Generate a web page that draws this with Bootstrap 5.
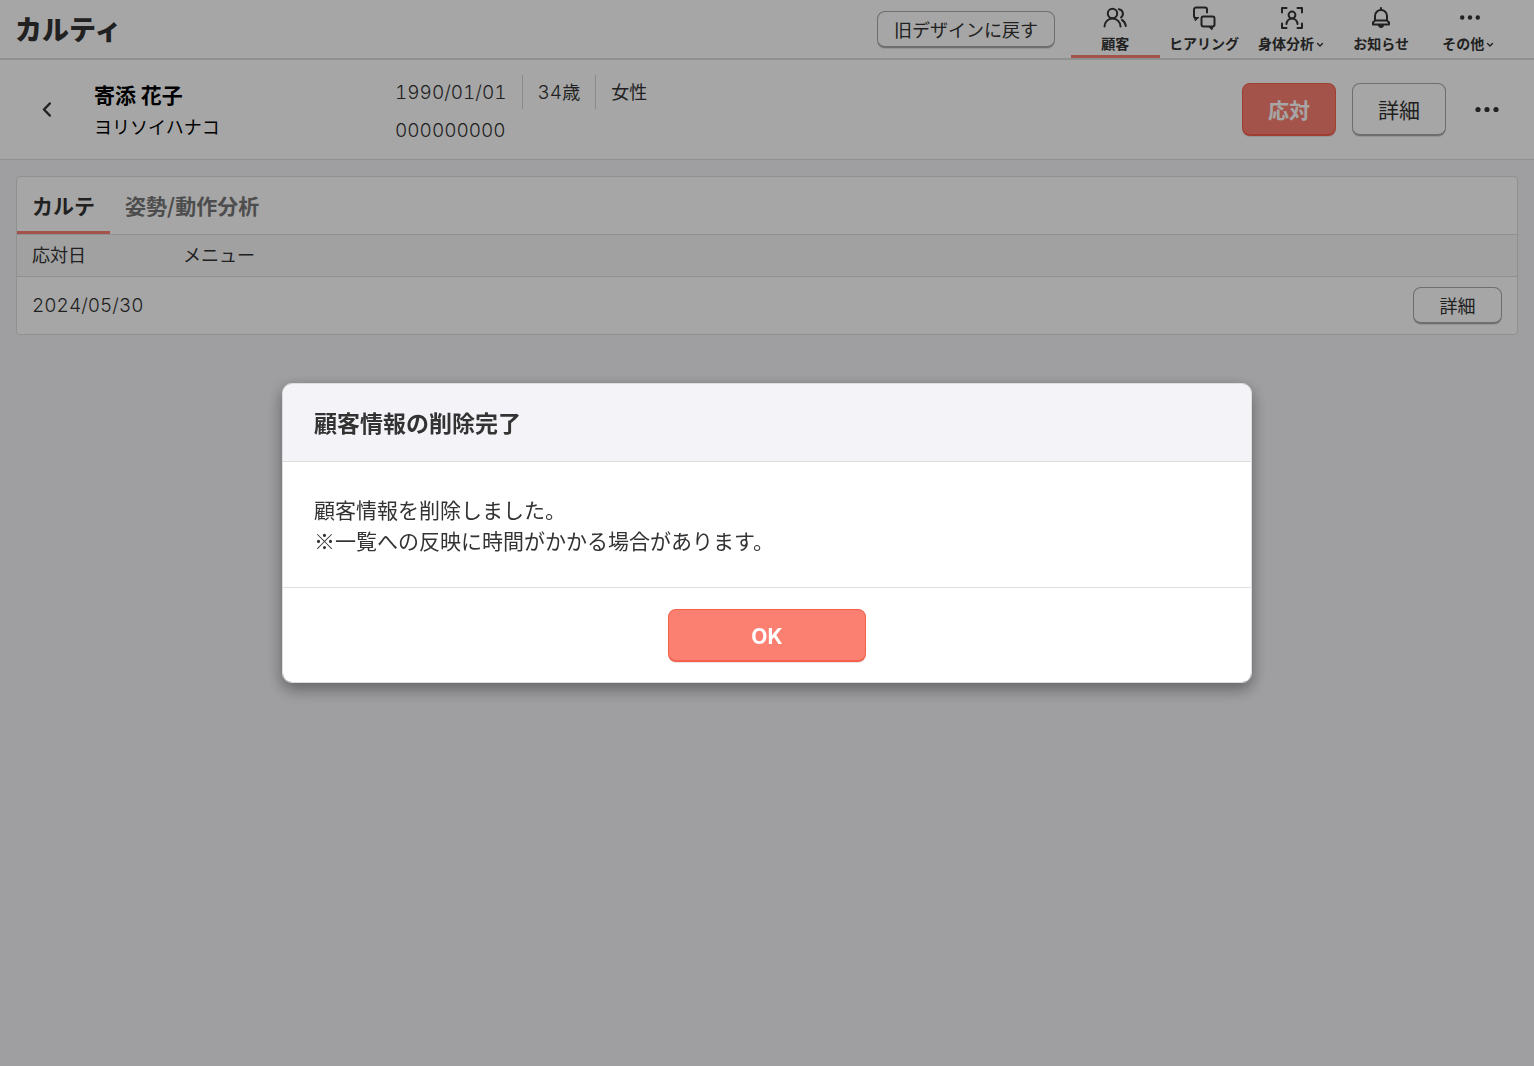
<!DOCTYPE html>
<html lang="ja">
<head>
<meta charset="utf-8">
<meta name="viewport" content="width=device-width, initial-scale=1">
<title>カルティ</title>
<link href="https://cdn.jsdelivr.net/npm/bootstrap@5.3.0/dist/css/bootstrap.min.css" rel="stylesheet">
<style>
  :root { --ink: #333; --line: #dedede; --coral: #fb8072; --coral-dark: #f4604c; --lavender: #f4f3f8; }
  body { font-family: "Noto Sans CJK JP", sans-serif; font-size: 18px; line-height: 28px; color: var(--ink); background: var(--lavender); }
  .topbar { height: 60px; border-bottom: 2px solid #dedede; padding: 0 20px 0 15px; }
  .brand-text { font-size: 27px; font-weight: 900; color: var(--ink); text-decoration: none; }
  .main-nav { width: 443px; height: 58px; }
  .main-nav a { color: var(--ink); font-size: 14px; line-height: 20px; font-weight: 700; text-decoration: none; padding-top: 5px; border-bottom: 3px solid transparent; flex: 1 1 0; white-space: nowrap; }
  .main-nav a.active { border-color: var(--coral); }
  .main-nav .nav-icon { width: 26px; height: 26px; margin-bottom: 2px; }
  .main-nav .caret { width: 8px; height: 14px; margin-left: 2px; }
  .main-nav .has-menu { padding-right: 3px; }
  .line-icon { fill: none; stroke: currentColor; stroke-width: 2; stroke-linecap: round; stroke-linejoin: round; }
  .btn-plain, .btn-coral { border-radius: 8px; border: 1px solid #aaa; border-bottom-width: 2px; padding: 0 16px; line-height: 28px; box-shadow: 0 1px 0 rgba(0,0,0,.1); }
  .btn-plain, .btn-plain:hover { background: #fff; color: var(--ink); border-color: #aaa; }
  .btn-coral, .btn-coral:hover { background: var(--coral); color: #fff; border-color: var(--coral-dark); font-weight: 700; }
  .btn-sm-h { height: 37px; font-size: 18px; }
  .btn-lg-h { height: 53px; font-size: 21px; }
  .w-action { width: 94px; }
  .w-row { width: 89px; }
  .customer { height: 100px; background: #fff; border-bottom: 1px solid var(--line); padding: 0 32px; }
  .customer-name { width: 309px; color: #000; }
  .customer-name h1 { font-size: 21px; line-height: 32px; font-weight: 700; margin: 0; }
  .customer-name div { line-height: 32px; }
  .digits { font-family: Inter, "Noto Sans CJK JP", sans-serif; font-size: 19px; font-weight: 300; font-variant-numeric: tabular-nums; }
  .fact-list { padding-top: 2px; }
  .facts { line-height: 32px; }
  .facts > span + span { border-left: 1px solid #d4d4d4; padding-left: 15px; margin-left: 15px; }
  .icon-btn { background: none; border: 0; padding: 0; color: var(--ink); }
  .panel { border: 1px solid var(--line); border-radius: 4px; background: #fff; overflow: hidden; }
  .panel-tabs { height: 58px; border-bottom: 1px solid var(--line); }
  .panel-tabs a { font-size: 21px; font-weight: 700; color: #777; text-decoration: none; padding: 14px 15px 0; border-bottom: 3px solid transparent; }
  .panel-tabs a.active { color: var(--ink); border-color: var(--coral); }
  .records { margin: 0; color: var(--ink); --bs-table-color: var(--ink); }
  .records th { background: #f7f7f7; font-weight: 400; padding: 5px 15px 8px; border-color: var(--line); }
  .records td { height: 57px; padding: 0 15px; vertical-align: middle; border: 0; }
  .records .col-date { width: 151px; }
  .dim { opacity: .35; }
  .notice { max-width: 970px; }
  .notice .modal-content { border: 1px solid #ddd; border-radius: 10px; color: var(--ink); box-shadow: 0 6px 16px rgba(0,0,0,.4); }
  .notice .modal-header { background: var(--lavender); height: 78px; padding: 0 31px; border-color: var(--line); border-radius: 9px 9px 0 0; }
  .notice .modal-title { font-size: 23px; font-weight: 700; }
  .notice .modal-body { font-size: 21px; line-height: 31px; padding: 32px 31px 31px; }
  .notice .modal-footer { padding: 21px 31px 20px; border-color: var(--line); }
  .notice .modal-footer > * { margin: 0; }
  .btn-ok { width: 198px; font-family: Inter, sans-serif; padding-top: 3px; }
</style>
<script src="https://cdn.jsdelivr.net/npm/bootstrap@5.3.0/dist/js/bootstrap.bundle.min.js" defer></script>
</head>
<body>
<header class="topbar d-flex align-items-center bg-white">
  <a class="brand-text" href="#">カルティ</a>
  <button type="button" class="btn btn-plain btn-sm-h ms-auto me-3">旧デザインに戻す</button>
  <nav class="main-nav d-flex align-self-start">
    <a class="active d-flex flex-column align-items-center" href="#">
      <svg class="nav-icon line-icon" viewBox="0 0 26 26"><circle cx="10.500" cy="8.500" r="4.700"/><path d="M2.500 21.500a8 8 0 0 1 16 0M16.800 4.200a4.600 4.600 0 0 1 2.200 8.300M20 14.800c2.200 1.500 3.600 4 3.800 6.200"/></svg>
      顧客</a>
    <a class="d-flex flex-column align-items-center" href="#">
      <svg class="nav-icon line-icon" viewBox="0 0 26 26"><path d="M5.500 13H5a2 2 0 0 1-2-2V4.500a2 2 0 0 1 2-2h9a2 2 0 0 1 2 2v3M12.500 11.500h9a2 2 0 0 1 2 2v6a2 2 0 0 1-2 2h-9a2 2 0 0 1-2-2v-6a2 2 0 0 1 2-2z"/><path fill="currentColor" stroke-width="1" d="M3.800 12.500h4L4.500 15.500zM18 21.500h4l-1 3z"/></svg>
      ヒアリング</a>
    <a class="d-flex flex-column align-items-center" href="#">
      <svg class="nav-icon line-icon" viewBox="0 0 26 26"><path d="M3 7.500V3h4.500M18.500 3H23v4.500M23 18.500V23h-4.500M7.500 23H3v-4.500M7.500 19a5.500 5.500 0 0 1 11 0"/><circle cx="13" cy="10" r="3.400"/></svg>
      <span class="has-menu">身体分析<svg class="line-icon caret" viewBox="0 0 8 14"><path stroke-width="1.400" d="M1.500 5.500L4 8l2.500-2.500"/></svg></span></a>
    <a class="d-flex flex-column align-items-center" href="#">
      <svg class="nav-icon line-icon" viewBox="0 0 26 26"><path d="M7 15.500V11a6 6 0 0 1 12 0v4.500l2 2V19.500H5v-2zM7 15.500h12M13 3v2"/><path fill="currentColor" stroke-width="1" d="M10.500 20.500h5a2.500 2 0 0 1-5 0z"/></svg>
      お知らせ</a>
    <a class="d-flex flex-column align-items-center" href="#">
      <svg class="nav-icon" viewBox="0 0 26 26" fill="currentColor"><circle cx="5.200" cy="12.500" r="2.200"/><circle cx="13" cy="12.500" r="2.200"/><circle cx="20.800" cy="12.500" r="2.200"/></svg>
      <span class="has-menu">その他<svg class="line-icon caret" viewBox="0 0 8 14"><path stroke-width="1.400" d="M1.500 5.500L4 8l2.500-2.500"/></svg></span></a>
  </nav>
</header>

<section class="customer d-flex align-items-center">
  <button type="button" class="icon-btn me-4" aria-label="戻る"><svg class="line-icon d-block" width="30" height="24" viewBox="0 0 30 24"><path stroke-width="2.500" d="M17.800 5.500L12 11.500l5.800 6"/></svg></button>
  <div class="customer-name ps-2">
    <h1>寄添 花子</h1>
    <div>ヨリソイハナコ</div>
  </div>
  <div class="fact-list">
    <div class="facts d-flex mb-1"><span><span class="digits">1990/01/01</span></span><span><span class="digits">34</span>歳</span><span>女性</span></div>
    <div class="facts"><span class="digits">000000000</span></div>
  </div>
  <div class="d-flex align-items-center gap-3 ms-auto">
    <button type="button" class="btn btn-coral btn-lg-h w-action">応対</button>
    <button type="button" class="btn btn-plain btn-lg-h w-action">詳細</button>
    <button type="button" class="icon-btn ms-2" aria-label="その他の操作"><svg class="d-block" width="32" height="24" viewBox="0 0 32 24" fill="currentColor"><circle cx="8" cy="11.500" r="2.600"/><circle cx="17" cy="11.500" r="2.600"/><circle cx="26" cy="11.500" r="2.600"/></svg></button>
  </div>
</section>

<main class="p-3">
  <div class="panel">
    <nav class="panel-tabs d-flex">
      <a class="active" href="#">カルテ</a>
      <a href="#">姿勢/動作分析</a>
    </nav>
    <table class="table records">
      <thead><tr><th class="col-date">応対日</th><th>メニュー</th><th></th></tr></thead>
      <tbody><tr><td><span class="digits">2024/05/30</span></td><td></td><td class="text-end"><button type="button" class="btn btn-plain btn-sm-h w-row">詳細</button></td></tr></tbody>
    </table>
  </div>
</main>

<div class="modal-backdrop dim"></div>
<div class="modal d-block" role="dialog" aria-modal="true" aria-labelledby="noticeTitle">
  <div class="modal-dialog modal-dialog-centered notice">
    <div class="modal-content">
      <div class="modal-header"><h2 class="modal-title" id="noticeTitle">顧客情報の削除完了</h2></div>
      <div class="modal-body">顧客情報を削除しました。<br>※一覧への反映に時間がかかる場合があります。</div>
      <div class="modal-footer justify-content-center"><button type="button" class="btn btn-coral btn-lg-h btn-ok">OK</button></div>
    </div>
  </div>
</div>
</body>
</html>
